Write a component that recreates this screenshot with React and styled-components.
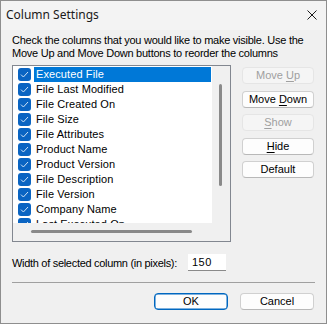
import React from "react";
import styled, { createGlobalStyle } from "styled-components";

const GlobalStyle = createGlobalStyle`
  html, body {
    margin: 0;
    padding: 0;
    background: #f0f0f0;
  }
  * {
    box-sizing: border-box;
  }
`;

const columns = [
  "Executed File",
  "File Last Modified",
  "File Created On",
  "File Size",
  "File Attributes",
  "Product Name",
  "Product Version",
  "File Description",
  "File Version",
  "Company Name",
  "Last Executed On",
];

function App() {
  return (
    <>
      <GlobalStyle />
      <Window>
        <TitleBar>
          <Title>Column Settings</Title>
          <CloseBox>
            <svg width="10" height="10" viewBox="0 0 10 10">
              <path d="M0.5 0.5 L9.5 9.5 M9.5 0.5 L0.5 9.5" stroke="#1a1a1a" strokeWidth="1" fill="none" />
            </svg>
          </CloseBox>
        </TitleBar>
        <Body>
          <Description>
            Check the columns that you would like to make visible. Use the
            <br />
            Move Up and Move Down buttons to reorder the columns
          </Description>
          <MainRow>
            <ListBox>
              <ListArea>
                {columns.map((name, i) => (
                  <Row key={name}>
                    <Check>
                      <svg width="9" height="9" viewBox="0 0 9 9">
                        <path d="M1 4.6 L3.4 7 L8 2" stroke="#cfe3f7" strokeWidth="1" fill="none" />
                      </svg>
                    </Check>
                    <Label $selected={i === 0}>{name}</Label>
                  </Row>
                ))}
              </ListArea>
              <VScroll>
                <VThumb />
              </VScroll>
              <HScroll>
                <HThumb />
              </HScroll>
              <Corner />
            </ListBox>
            <SideButtons>
              <Button disabled>
                Move <u>U</u>p
              </Button>
              <Button>
                Move <u>D</u>own
              </Button>
              <Button disabled>
                <u>S</u>how
              </Button>
              <Button>
                <u>H</u>ide
              </Button>
              <Button>Default</Button>
            </SideButtons>
          </MainRow>
          <WidthRow>
            <WidthLabel>Width of selected column (in pixels):</WidthLabel>
            <NumberBox>150</NumberBox>
          </WidthRow>
          <Separator />
          <Footer>
            <Button $wide $default>
              OK
            </Button>
            <Button $wide>Cancel</Button>
          </Footer>
        </Body>
      </Window>
    </>
  );
}

export default App;

const Window = styled.div`
  width: 327px;
  height: 324px;
  border: 1px solid #8e8e8e;
  background: #f0f0f0;
  display: flex;
  flex-direction: column;
  font-family: "Liberation Sans", Arial, sans-serif;
  font-size: 11px;
  color: #000;
`;

const TitleBar = styled.div`
  height: 29px;
  display: flex;
  align-items: center;
  justify-content: space-between;
  padding: 0 9px 2px 5px;
  background: #f3f3f3;
`;

const Title = styled.div`
  font-family: "Noto Sans", "Open Sans", sans-serif;
  font-size: 12px;
  color: #1a1a1a;
`;

const CloseBox = styled.div`
  display: flex;
  align-items: center;
`;

const Body = styled.div`
  flex: 1;
  display: flex;
  flex-direction: column;
  padding: 4px 11px 0 11px;
`;

const Description = styled.div`
  line-height: 13px;
  letter-spacing: -0.25px;
  height: 31px;
`;

const MainRow = styled.div`
  display: flex;
  align-items: flex-start;
  gap: 11px;
`;

const ListBox = styled.div`
  width: 219px;
  height: 177px;
  border: 1px solid #828790;
  display: grid;
  grid-template-columns: 199px 17px;
  grid-template-rows: 157px 17px;
  background: #f0f0f0;
`;

const ListArea = styled.div`
  background: #fff;
  padding-top: 1px;
  overflow: hidden;
`;

const Row = styled.div`
  height: 15px;
  display: flex;
  align-items: center;
  padding-left: 5px;
`;

const Check = styled.div`
  width: 13px;
  height: 13px;
  border-radius: 3px;
  background: #0a64c2;
  display: flex;
  align-items: center;
  justify-content: center;
  flex-shrink: 0;
`;

const Label = styled.div`
  flex: 1;
  height: 15px;
  line-height: 15px;
  margin-left: 3px;
  margin-right: 1px;
  padding-left: 2px;
  white-space: nowrap;
  letter-spacing: 0.1px;
  background: ${(p) => (p.$selected ? "#0078d7" : "transparent")};
  color: ${(p) => (p.$selected ? "#fff" : "#000")};
`;

const VScroll = styled.div`
  display: flex;
  justify-content: center;
  padding-top: 18px;
  padding-right: 1px;
`;

const VThumb = styled.div`
  width: 3px;
  height: 102px;
  border-radius: 2px;
  background: #8a8a8a;
`;

const HScroll = styled.div`
  display: flex;
  align-items: center;
  padding-left: 18px;
`;

const HThumb = styled.div`
  width: 161px;
  height: 3px;
  border-radius: 2px;
  background: #8a8a8a;
`;

const Corner = styled.div``;

const SideButtons = styled.div`
  display: flex;
  flex-direction: column;
  gap: 6.5px;
  padding-top: 2px;
  width: 72px;
`;

const Button = styled.button`
  width: ${(p) => (p.$wide ? "74px" : "72px")};
  height: 17px;
  padding: 0;
  font-family: "Liberation Sans", Arial, sans-serif;
  font-size: 11px;
  line-height: 15px;
  color: #000;
  background: #fdfdfd;
  border: 1px solid ${(p) => (p.$default ? "#0067c0" : "#d0d0d0")};
  border-bottom-color: ${(p) => (p.$default ? "#0067c0" : "#b8b8b8")};
  border-radius: 4px;
  box-shadow: ${(p) => (p.$default ? "inset 0 0 0 0.5px #0067c0" : "none")};
  &:disabled {
    background: #f5f5f5;
    border-color: #e5e5e5;
    color: #a0a0a0;
  }
  u {
    text-decoration-thickness: 1px;
    text-underline-offset: 2px;
  }
`;

const WidthRow = styled.div`
  display: flex;
  align-items: center;
  margin-top: 12px;
  height: 17px;
`;

const WidthLabel = styled.div`
  width: 176px;
  letter-spacing: -0.3px;
`;

const NumberBox = styled.div`
  width: 38px;
  height: 17px;
  background: #fff;
  border-bottom: 1px solid #8a8a8a;
  padding-left: 4px;
  line-height: 16px;
  letter-spacing: 0.5px;
`;

const Separator = styled.div`
  height: 1px;
  margin-top: 11px;
  width: 303px;
  background: #a0a0a0;
`;

const Footer = styled.div`
  display: flex;
  justify-content: flex-end;
  gap: 12px;
  margin-top: 10px;
  padding-right: 1px;
`;
